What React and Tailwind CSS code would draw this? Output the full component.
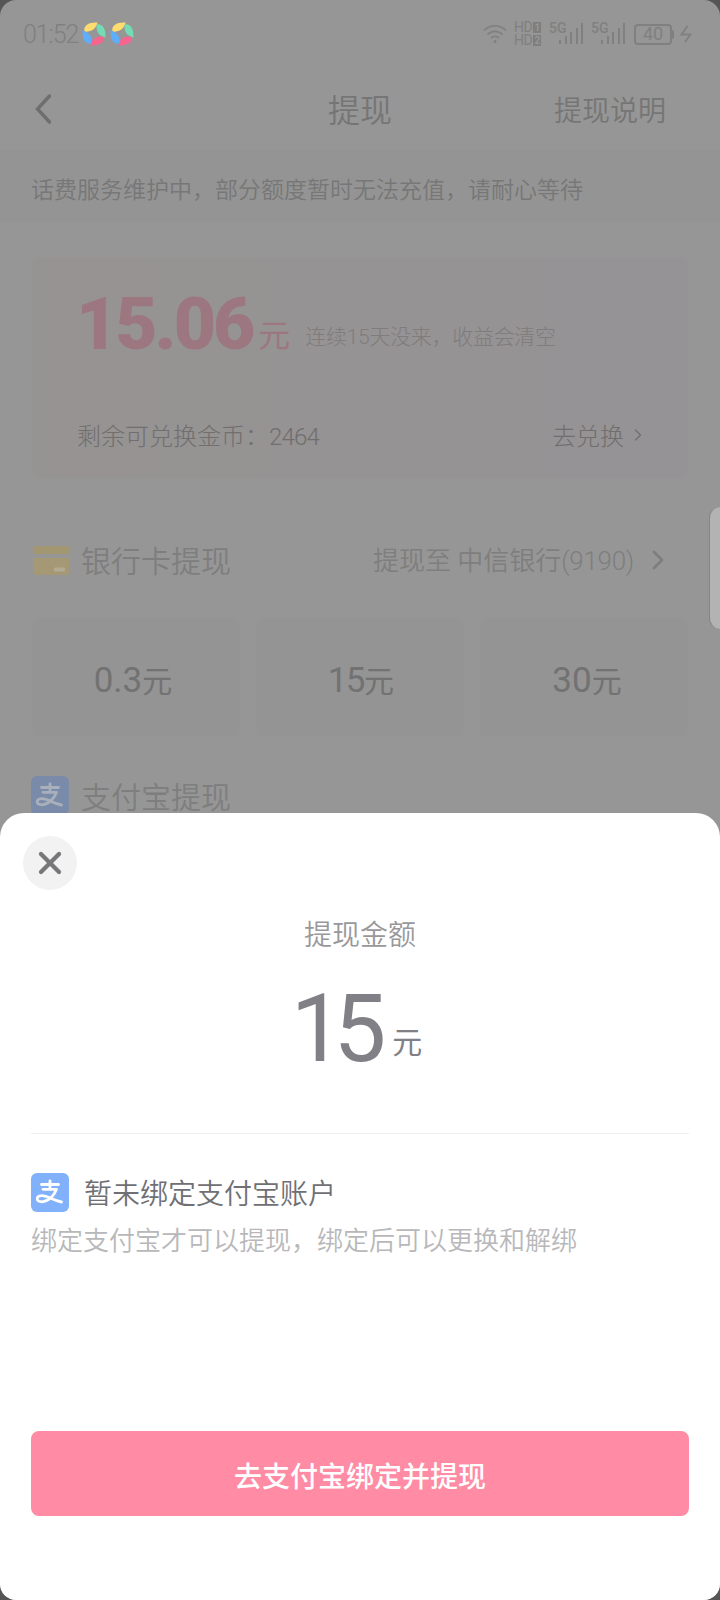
import { ChevronRight, X } from 'lucide-react';
import clsx from 'clsx';

const AMOUNTS = [
  { value: '0.3', className: 'pr-1.5' },
  { value: '15', className: 'tracking-[-1.6px]' },
  { value: '30', className: 'pl-1.5' },
];

const PETALS = [
  { color: '#ffdb70', angle: 0 },
  { color: '#74dcb4', angle: 90 },
  { color: '#f7658f', angle: 180 },
  { color: '#60aefa', angle: 270 },
];

function Pinwheel() {
  return (
    <svg viewBox="0 0 24 24" className="w-6 h-6">
      {PETALS.map((p) => (
        <path
          key={p.angle}
          d="M2.4 9 C1.6 3.4 7 0 15.6 0.6 C14.2 5 12 9 6 9.4 Q3.4 10 2.4 9Z"
          fill={p.color}
          transform={`rotate(${p.angle} 12 12)`}
        />
      ))}
    </svg>
  );
}

function AlipayIcon({ className }) {
  return (
    <div className={clsx('w-[38px] h-[39px] rounded-md shrink-0', className)}>
      <svg
        viewBox="0 0 38 39"
        className="w-full h-full"
        fill="none"
        stroke="currentColor"
        strokeWidth="2.8"
        strokeLinecap="round"
        strokeLinejoin="round"
      >
        <path d="M10.5 11.5H27.5M19 8V16M12 16.3H25.5C23.5 22 18 28.5 11 28.8C4.8 28.8 4.6 22.8 10.5 22.6C17 22.4 22 27.5 30.5 29" />
      </svg>
    </div>
  );
}

function Wifi() {
  return (
    <svg viewBox="0 0 24 20" className="w-6 h-5" fill="none" stroke="currentColor" strokeWidth="1.8">
      <path d="M1 6.5C7 0.2 17 0.2 23 6.5M4.5 10.5C8.5 6.2 15.5 6.2 19.5 10.5M8 14C10.2 11.8 13.8 11.8 16 14" />
      <circle cx="12" cy="17.4" r="1.5" fill="currentColor" stroke="none" />
    </svg>
  );
}

function Signal() {
  return (
    <div className="relative w-[34px] h-6">
      <span className="absolute left-0 top-0 text-[14px] leading-3 font-medium">5G</span>
      <div className="absolute right-0 bottom-0.5 flex items-end gap-[3.5px]">
        <i className="w-0.5 h-1 bg-current" />
        <i className="w-0.5 h-2 bg-current" />
        <i className="w-0.5 h-3 bg-current" />
        <i className="w-0.5 h-4 bg-current" />
        <i className="w-0.5 h-[21px] bg-current" />
      </div>
    </div>
  );
}

function HdLine({ n }) {
  return (
    <div className="flex items-center gap-px">
      HD
      <span className="w-2 h-[11px] bg-[#7e7e7e] text-[#969696] text-[10px] leading-[11px] text-center font-bold">
        {n}
      </span>
    </div>
  );
}

function StatusBar() {
  return (
    <div className="h-[68px] pl-[23px] pr-[28px] flex items-center justify-between text-[#808080]">
      <div className="flex items-center">
        <span className="w-[59px] pt-px text-[25px] font-light tracking-[-1.1px] whitespace-nowrap">01:52</span>
        <div className="flex gap-1">
          <Pinwheel />
          <Pinwheel />
        </div>
      </div>
      <div className="flex items-center">
        <Wifi />
        <div className="ml-[7px] w-[30px] text-[14px] leading-[13px] tracking-[-0.5px]">
          <HdLine n="1" />
          <HdLine n="2" />
        </div>
        <div className="ml-[5px] flex gap-2">
          <Signal />
          <Signal />
        </div>
        <div className="ml-[9px] w-[38px] h-[21px] rounded border-2 border-current flex items-center justify-center text-[18px] leading-none">
          40
        </div>
        <i className="w-[2px] h-[9px] rounded-r bg-current" />
        <svg viewBox="0 0 12 18" className="ml-[6px] w-3 h-[18px]" fill="none" stroke="currentColor" strokeWidth="1.8">
          <path d="M7.5 1L1.5 9.5H10.5L5 17" />
        </svg>
      </div>
    </div>
  );
}

function BalanceCard() {
  return (
    <section className="mx-8 mt-[34px] h-[221px] rounded-md pl-[44px] pr-[46px] bg-linear-to-r from-[#969492] via-[#969393] via-20% to-[#959395] flex flex-col">
      <div className="h-[110px] flex items-end text-[#9d7780]">
        <span className="text-[73px] leading-[85px] font-black tracking-[-3px]">15.06</span>
        <span className="ml-[6px] mb-[11px] text-[32px] leading-10">元</span>
        <span className="ml-[15px] mb-[16px] text-[21px] leading-7 font-light tracking-[-0.3px] text-[#7f7c7c]">
          连续15天没来，收益会清空
        </span>
      </div>
      <div className="mt-[52px] pl-px flex items-center justify-between text-2xl leading-9 font-light text-[#706e6e]">
        <span>
          剩余可兑换金币：<span className="tracking-[-0.8px]">2464</span>
        </span>
        <span className="flex items-center -mr-[6px]">
          去兑换
          <ChevronRight size={20} strokeWidth={1.6} className="ml-1 mb-1" />
        </span>
      </div>
    </section>
  );
}

function WithdrawSheet() {
  return (
    <div className="absolute inset-x-0 bottom-0 h-[787px] bg-white rounded-t-3xl px-[31px]">
      <button className="mt-[23px] -ml-2 w-[54px] h-[54px] rounded-full bg-[#f2f2f3] flex items-center justify-center text-[#77777a]">
        <X size={36} strokeWidth={2.8} />
      </button>
      <div className="mt-[25px] text-center text-[28px] leading-[42px] font-[350] text-[#98989b]">提现金额</div>
      <div className="mt-[16px] pr-[7px] h-[112px] flex justify-center items-start text-[#808086]">
        <span className="text-[94px] leading-[112px] font-normal tracking-[-10px]">15</span>
        <span className="ml-[16px] mt-[50px] text-[30px] leading-10">元</span>
      </div>
      <div className="mt-[48px] h-px bg-[#eeeeef]" />
      <div className="mt-[39px] h-[39px] flex items-center">
        <AlipayIcon className="bg-[#80b1fa] text-white" />
        <span className="ml-[15px] pt-1 text-[28px] leading-[39px] font-[350] text-[#707074]">暂未绑定支付宝账户</span>
      </div>
      <p className="mt-[10px] text-[26px] leading-[38px] font-[350] text-[#b8b8ba]">
        绑定支付宝才可以提现，绑定后可以更换和解绑
      </p>
      <button className="mt-[171px] pt-2 w-full h-[85px] rounded-lg bg-[#ff8ca4] text-white text-[28px] font-medium">
        去支付宝绑定并提现
      </button>
    </div>
  );
}

function App() {
  return (
    <div className="bg-[#555] w-[720px] h-[1600px]">
      <div className="relative h-full overflow-hidden rounded-2xl bg-[#969696] font-[Roboto,'Noto_Sans_CJK_SC',sans-serif]">
        <StatusBar />

        {/* Nav bar */}
        <header className="h-[81px] pl-[28px] pr-[54px] grid grid-cols-[1fr_auto_1fr] items-center text-[#757575]">
          <svg viewBox="0 0 16 32" className="ml-[7px] w-4 h-8" fill="none" stroke="#6e6e6e" strokeWidth="3.4" strokeLinecap="round">
            <path d="M14.5 3L2.5 16L14.5 29" />
          </svg>
          <h1 className="ml-[26px] pt-1 text-[32px] leading-[48px] font-[350]">提现</h1>
          <span className="pt-1.5 text-right text-[28px] font-[350]">提现说明</span>
        </header>

        <div className="h-[74px] px-[31px] pt-2.5 flex items-center bg-[#949494] text-[23px] font-[350] text-[#777]">
          话费服务维护中，部分额度暂时无法充值，请耐心等待
        </div>

        <BalanceCard />

        {/* Bank card */}
        <div className="mt-[60px] pl-[33px] pr-[46px] h-11 flex items-center text-[#7e7e7e]">
          <svg viewBox="0 0 36 29" className="w-9 h-[29px]">
            <path d="M2 0H34Q36 0 36 2V8H0V2Q0 0 2 0Z" fill="#a39772" />
            <path d="M0 12H36V27Q36 29 34 29H2Q0 29 0 27Z" fill="#a59975" />
            <rect x="21" y="21.5" width="11" height="4" rx="1" fill="#b3aa93" />
          </svg>
          <span className="ml-[12px] pt-0.5 text-[30px] font-[350]">银行卡提现</span>
          <span className="ml-auto pt-0.5 text-[26px] font-[350]">
            提现至 中信银行<span className="tracking-[-0.3px]">(9190)</span>
          </span>
          <ChevronRight size={32} strokeWidth={2} className="ml-2" />
        </div>

        <div className="mt-[36px] px-8 grid grid-cols-3 gap-4">
          {AMOUNTS.map((a) => (
            <div
              key={a.value}
              className={clsx(
                'h-[118px] pt-2 rounded-md bg-[#949494] flex items-center justify-center text-[#727272]',
                a.className
              )}
            >
              <span className="text-[35px]">{a.value}</span>
              <span className="text-[30px]">元</span>
            </div>
          ))}
        </div>

        {/* Alipay */}
        <div className="mt-[40px] px-[31px] h-[39px] flex items-center text-[#7e7e7e]">
          <AlipayIcon className="bg-[#7a8ba9] text-[#a9b0bc]" />
          <span className="ml-[12px] pt-1 text-[30px] leading-[39px] font-[350]">支付宝提现</span>
        </div>

        {/* Edge panel handle */}
        <div className="absolute right-0 top-[507px] w-[11px] h-[122px] rounded-l-xl bg-[#b3b3b3] border-l border-[#858585]" />

        <WithdrawSheet />
      </div>
    </div>
  );
}

export default App;
